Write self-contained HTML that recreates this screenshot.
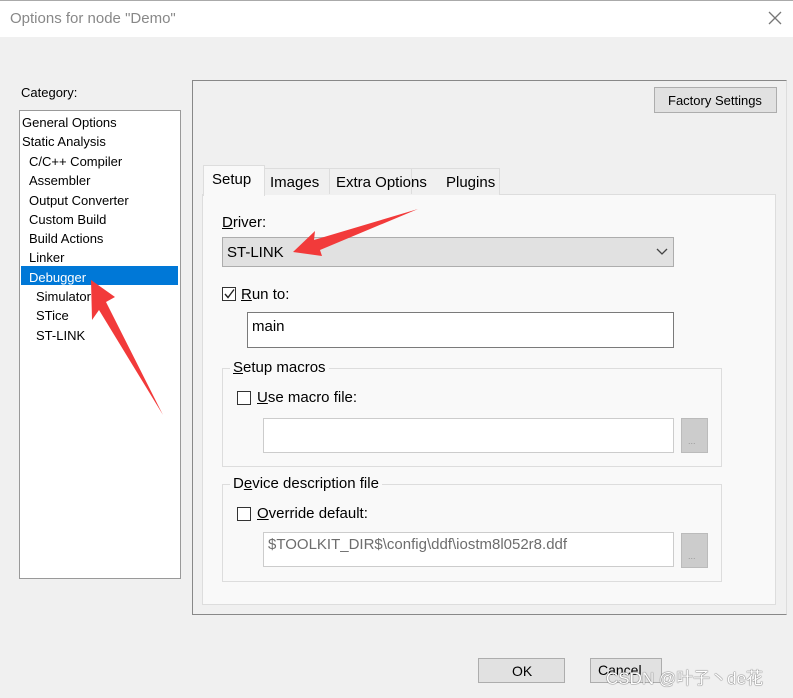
<!DOCTYPE html>
<html><head><meta charset="utf-8"><style>
*{margin:0;padding:0;box-sizing:border-box}
body{width:793px;height:698px;background:#f0f0f0;font-family:"Liberation Sans","Noto Sans CJK SC",sans-serif;font-size:14px;color:#000;position:relative;overflow:hidden}
.a{position:absolute}
.t{position:absolute;white-space:nowrap;line-height:16px}
.cb{position:absolute;width:14px;height:14px;border:1px solid #333;background:#fff}
u{text-decoration:underline}
</style></head><body>
<div class="a" style="left:0;top:0;width:793px;height:37px;background:#fff;border-top:1px solid #aaa"></div>
<div class="t" style="left:10px;top:11px;font-size:15px;color:#888">Options for node "Demo"</div>
<svg class="a" style="left:768px;top:11px" width="14" height="14"><path d="M1 1L13 13M13 1L1 13" stroke="#777" stroke-width="1.3"/></svg>

<div class="t" style="left:21px;top:85px;font-size:13px">Category:</div>
<div class="a" style="left:19px;top:110px;width:162px;height:469px;background:#fff;border:1px solid #999"></div>
<div class="a" style="left:21px;top:266px;width:157px;height:19px;background:#0078d7"></div>
<div class="t" style="left:22px;top:113px;font-size:13px;line-height:19.3px">General Options<br>Static Analysis</div>
<div class="t" style="left:29px;top:152px;font-size:13px;line-height:19.3px">C/C++ Compiler<br>Assembler<br>Output Converter<br>Custom Build<br>Build Actions<br>Linker<br><span style="color:#fff">Debugger</span></div>
<div class="t" style="left:36px;top:287px;font-size:13px;line-height:19.3px">Simulator<br>STice<br>ST-LINK</div>

<div class="a" style="left:192px;top:80px;width:595px;height:535px;border:1px solid #888;border-right-color:#ddd;border-bottom-color:#888"></div>
<div class="a" style="left:654px;top:87px;width:123px;height:26px;background:#e1e1e1;border:1px solid #adadad"></div>
<div class="t" style="left:668px;top:93px;font-size:13px">Factory Settings</div>

<div class="a" style="left:202px;top:194px;width:574px;height:411px;background:#f9f9f9;border:1px solid #ddd"></div>
<div class="a" style="left:264px;top:168px;width:236px;height:27px;background:#f0f0f0;border:1px solid #ddd;border-bottom:none"></div>
<div class="a" style="left:329px;top:168px;width:1px;height:26px;background:#ddd"></div>
<div class="a" style="left:411px;top:168px;width:1px;height:26px;background:#ddd"></div>
<div class="a" style="left:203px;top:165px;width:62px;height:31px;background:#f9f9f9;border:1px solid #ddd;border-bottom:none"></div>
<div class="t" style="left:212px;top:172px;font-size:15px">Setup</div>
<div class="t" style="left:270px;top:175px;font-size:15px">Images</div>
<div class="t" style="left:336px;top:175px;font-size:15px">Extra Options</div>
<div class="t" style="left:446px;top:175px;font-size:15px">Plugins</div>

<div class="t" style="left:222px;top:215px;font-size:15px"><u>D</u>river:</div>
<div class="a" style="left:222px;top:237px;width:452px;height:30px;background:#e1e1e1;border:1px solid #adadad"></div>
<div class="t" style="left:227px;top:245px;font-size:15px">ST-LINK</div>
<svg class="a" style="left:656px;top:248px" width="12" height="8"><path d="M1 1L6 6L11 1" stroke="#444" fill="none" stroke-width="1.3"/></svg>

<div class="cb" style="left:222px;top:287px"></div>
<svg class="a" style="left:222px;top:287px" width="14" height="14"><path d="M3 7L6 10.5L12 2.5" stroke="#222" fill="none" stroke-width="1.4"/></svg>
<div class="t" style="left:241px;top:287px;font-size:15px"><u>R</u>un to:</div>
<div class="a" style="left:247px;top:312px;width:427px;height:36px;background:#fff;border:1px solid #7a7a7a"></div>
<div class="t" style="left:252px;top:319px;font-size:15px">main</div>

<div class="a" style="left:222px;top:368px;width:500px;height:99px;border:1px solid #ddd"></div>
<div class="t" style="left:230px;top:360px;font-size:15px;background:#f9f9f9;padding:0 3px"><u>S</u>etup macros</div>
<div class="cb" style="left:237px;top:391px"></div>
<div class="t" style="left:257px;top:390px;font-size:15px"><u>U</u>se macro file:</div>
<div class="a" style="left:263px;top:418px;width:411px;height:35px;background:#fff;border:1px solid #ccc"></div>
<div class="a" style="left:681px;top:418px;width:27px;height:35px;background:#ccc;border:1px solid #bbb"></div>
<div class="t" style="left:688px;top:433px;font-size:9px;color:#999">...</div>

<div class="a" style="left:222px;top:484px;width:500px;height:98px;border:1px solid #ddd"></div>
<div class="t" style="left:230px;top:476px;font-size:15px;background:#f9f9f9;padding:0 3px">D<u>e</u>vice description file</div>
<div class="cb" style="left:237px;top:507px"></div>
<div class="t" style="left:257px;top:506px;font-size:15px"><u>O</u>verride default:</div>
<div class="a" style="left:263px;top:532px;width:411px;height:35px;background:#fff;border:1px solid #ccc"></div>
<div class="t" style="left:268px;top:537px;font-size:15px;color:#6d6d6d">$TOOLKIT_DIR$\config\ddf\iostm8l052r8.ddf</div>
<div class="a" style="left:681px;top:533px;width:27px;height:35px;background:#ccc;border:1px solid #bbb"></div>
<div class="t" style="left:688px;top:548px;font-size:9px;color:#999">...</div>

<div class="a" style="left:478px;top:658px;width:87px;height:25px;background:#e1e1e1;border:1px solid #adadad"></div>
<div class="t" style="left:512px;top:663px;font-size:14px">OK</div>
<div class="a" style="left:590px;top:658px;width:72px;height:25px;background:#e1e1e1;border:1px solid #adadad"></div>
<div class="t" style="left:598px;top:662px;font-size:14px">Cancel</div>
<div class="t" style="left:606px;top:669px;font-size:17px;line-height:20px;color:#fff;text-shadow:0 0 1px #555,0 0 1px #555">CSDN @叶子丶de花</div>

<svg class="a" style="left:0;top:0" width="793" height="698">
<polygon fill="#f23a3a" points="293,252 315,231 314,240 418,209 320,250 322,256"/>
<polygon fill="#f23a3a" points="91,280 115,297 106,302 163,415 99,310 92,320"/>
</svg>
</body></html>
